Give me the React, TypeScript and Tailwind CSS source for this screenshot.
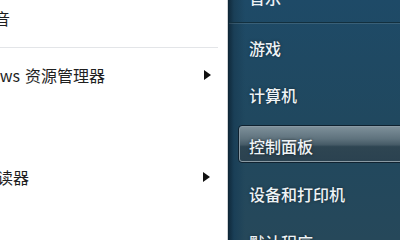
import React from "react";

const font = { fontFamily: '"Noto Sans CJK SC", "Noto Sans", sans-serif' };

function Arrow() {
  return <span className="block w-0 h-0 border-y-[5px] border-y-transparent border-l-[7px] border-l-[#111]" />;
}

export default function App() {
  return (
    <div className="w-[400px] h-[240px] flex overflow-hidden bg-white" style={font}>
      {/* Left white panel */}
      <div className="w-[228px] h-full bg-white border-r border-[#cfd3d6] flex flex-col overflow-hidden text-[16px] text-[#1f1f1f]">
        <div className="h-[36px] flex items-center shrink-0">
          <span className="-ml-[6px] leading-none">音</span>
        </div>
        <div className="h-[11px] shrink-0" />
        <div className="h-px w-[218px] bg-[#e3e5e8] shrink-0" />
        <div className="h-[54px] flex items-center justify-between pr-[16px] shrink-0">
          <div className="flex items-center whitespace-nowrap leading-none">
            <span className="w-[20px] flex justify-end">Windows</span>
            <span className="ml-[5px]">资源管理器</span>
          </div>
          <Arrow />
        </div>
        <div className="h-[50px] shrink-0" />
        <div className="h-[50px] flex items-center justify-between pr-[17px] shrink-0">
          <div className="flex items-center whitespace-nowrap leading-none">
            <span className="w-[29px] flex justify-end">阅读器</span>
          </div>
          <Arrow />
        </div>
      </div>

      {/* Right dark panel */}
      <div className="relative flex-1 h-full border-l border-[#0e2636] bg-[linear-gradient(to_bottom,#1e4a67_0%,#20485f_50%,#26485a_100%)] text-[16px] font-medium text-[#eef3f6] overflow-hidden">
        <div className="absolute inset-y-0 left-0 w-[16px] bg-[linear-gradient(to_right,#112c3e_0px,#1a3f57_5px,rgba(30,70,95,0)_16px)] pointer-events-none" />
        <div className="relative flex flex-col">
          <div className="h-[22px] shrink-0 pl-[20px]">
            <span className="block -mt-[11px] leading-[16px]">音乐</span>
          </div>
          <div className="h-px bg-[#12303f] shrink-0" />
          <div className="h-px bg-[rgba(255,255,255,0.12)] shrink-0" />
          <div className="h-[47px] flex items-center pl-[20px] shrink-0 [text-shadow:0_0_3px_rgba(0,0,0,0.5)]">游戏</div>
          <div className="h-[47px] flex items-center pl-[20px] shrink-0 [text-shadow:0_0_3px_rgba(0,0,0,0.5)]">计算机</div>
          <div className="h-[7px] shrink-0" />
          <div className="ml-[9px] -mr-[8px] h-[38px] rounded-[4px] border border-[#0f2230] shrink-0">
            <div className="h-full rounded-[3px] border border-[#8a9aa4] bg-[linear-gradient(to_bottom,#7d8f99_0%,#5e727d_35%,#465b67_52%,#2e4552_58%,#2b4250_100%)] flex items-center pl-[9px] pt-[3px] [text-shadow:0_0_3px_rgba(0,0,0,0.6)]">
              控制面板
            </div>
          </div>
          <div className="h-[7px] shrink-0" />
          <div className="h-[48px] flex items-center pl-[20px] shrink-0 [text-shadow:0_0_3px_rgba(0,0,0,0.5)]">设备和打印机</div>
          <div className="h-[48px] flex items-center pl-[20px] shrink-0 [text-shadow:0_0_3px_rgba(0,0,0,0.5)]">默认程序</div>
        </div>
      </div>
    </div>
  );
}
